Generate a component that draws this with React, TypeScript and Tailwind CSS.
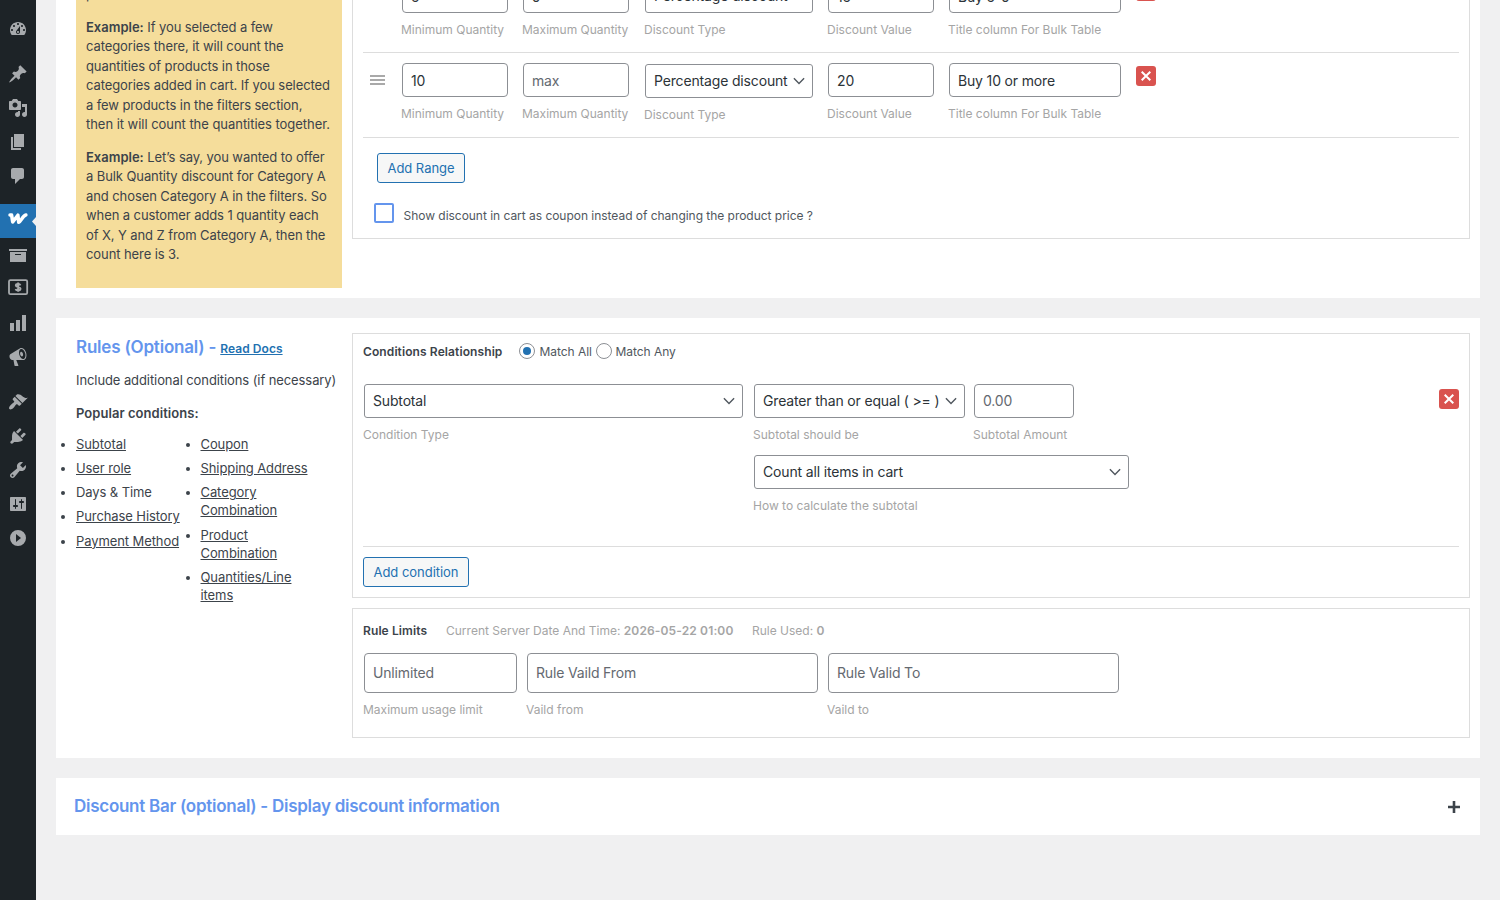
import React from 'react';

const MENU_GROUPS: { id: string; path: string }[][] = [
  [
    {
      id: 'dashboard',
      path: 'M3.76 16h12.48c1.1-1.37 1.76-3.11 1.76-5 0-4.42-3.58-8-8-8s-8 3.58-8 8c0 1.89.66 3.63 1.76 5zM10 4c.55 0 1 .45 1 1s-.45 1-1 1-1-.45-1-1 .45-1 1-1zM6 6c.55 0 1 .45 1 1s-.45 1-1 1-1-.45-1-1 .45-1 1-1zm8 0c.55 0 1 .45 1 1s-.45 1-1 1-1-.45-1-1 .45-1 1-1zm-5.37 5.55L12 7v6c0 1.1-.9 2-2 2s-2-.9-2-2c0-.57.24-1.08.63-1.45zM4 10c.55 0 1 .45 1 1s-.45 1-1 1-1-.45-1-1 .45-1 1-1zm12 0c.55 0 1 .45 1 1s-.45 1-1 1-1-.45-1-1 .45-1 1-1zm-5 3c0-.55-.45-1-1-1s-1 .45-1 1 .45 1 1 1 1-.45 1-1z',
    },
  ],
  [
    {
      id: 'posts',
      path: 'M10.44 3.02l1.82-1.82 6.36 6.35-1.83 1.82c-1.05-.68-2.48-.57-3.41.36l-.75.75c-.92.93-1.04 2.35-.35 3.41l-1.83 1.82-2.41-2.41-2.8 2.79c-.42.42-3.38 2.71-3.8 2.29s1.86-3.39 2.28-3.81l2.79-2.79L4.1 9.36l1.83-1.82c1.05.69 2.48.57 3.4-.36l.75-.75c.93-.92 1.05-2.35.36-3.41z',
    },
    {
      id: 'media',
      path: 'M13 11V4c0-.55-.45-1-1-1h-1.67L9 1H5L3.67 3H2c-.55 0-1 .45-1 1v7c0 .55.45 1 1 1h10c.55 0 1-.45 1-1zM7 4.5c1.38 0 2.5 1.12 2.5 2.5S8.38 9.5 7 9.5 4.5 8.38 4.5 7 5.62 4.5 7 4.5zM14 6h5v10.5c0 1.38-1.12 2.5-2.5 2.5S14 17.88 14 16.5s1.12-2.5 2.5-2.5c.17 0 .34.02.5.05V9h-3V6zm-4 8.05V13h2v3.5c0 1.38-1.12 2.5-2.5 2.5S7 17.88 7 16.5 8.12 14 9.5 14c.17 0 .34.02.5.05z',
    },
    { id: 'pages', path: 'M6 15V2h10v13H6zm-1 1h8v2H3V5h2v11z' },
    {
      id: 'comments',
      path: 'M5 2h9c1.1 0 2 .9 2 2v7c0 1.1-.9 2-2 2h-2l-5 5v-5H5c-1.1 0-2-.9-2-2V4c0-1.1.9-2 2-2z',
    },
  ],
  [
    { id: 'woo', path: '' },
    { id: 'products', path: 'M19 4v2H1V4h18zM2 7h16v10H2V7zm11 3V9H7v1h6z' },
    { id: 'payments', path: '' },
    { id: 'analytics', path: 'M18 18V2h-4v16h4zm-6 0V7H8v11h4zm-6 0v-8H2v8h4z' },
    {
      id: 'marketing',
      path: 'M18.15 5.94c.46 1.62.38 3.22-.02 4.48-.42 1.28-1.26 2.18-2.3 2.48-.16.06-.26.06-.4.06-.06.02-.12.02-.18.02-.06.02-.14.02-.22.02h-6.8l2.22 5.5c.02.14-.06.26-.14.34-.08.1-.24.16-.34.16H6.95c-.1 0-.26-.06-.34-.16-.08-.08-.16-.2-.14-.34l-1-5.5H4.25l-.02-.02c-.5.06-1.08-.18-1.54-.62s-.88-1.08-1.06-1.88c-.24-.8-.2-1.56-.02-2.2.18-.62.58-1.08 1.06-1.3l.02-.02 9-5.4c.1-.06.18-.1.24-.16.06-.04.14-.08.24-.12.16-.08.28-.12.5-.18 1.04-.3 2.24.1 3.22.98s1.84 2.24 2.26 3.86zm-2.58 5.98h-.02c.4-.1.74-.34 1.04-.7.58-.7.86-1.76.86-3.04 0-.64-.1-1.3-.28-1.98-.34-1.36-1.02-2.5-1.78-3.24s-1.68-1.1-2.46-.88c-.82.22-1.4.96-1.7 2-.32 1.04-.28 2.36.06 3.72.38 1.36 1 2.5 1.8 3.24.78.74 1.62 1.1 2.48.88zm-2.54-7.08c.22-.04.42-.02.62.04.38.16.76.48 1.02 1s.42 1.2.42 1.78c0 .3-.04.56-.12.8-.18.48-.44.84-.86.94-.34.1-.8-.06-1.14-.4s-.64-.86-.78-1.5c-.18-.62-.12-1.24.02-1.72s.48-.84.82-.94z',
    },
  ],
  [
    {
      id: 'appearance',
      path: 'M14.48 11.06L7.41 3.99l1.5-1.5c.5-.56 2.3-.47 3.51.32 1.21.8 1.43 1.28 2.91 2.1 1.18.64 2.45 1.26 4.45.85zm-.71.71L6.7 4.7 4.93 6.47c-.39.39-.39 1.02 0 1.41l1.06 1.06c.39.39.39 1.03 0 1.42-.6.6-1.43 1.11-2.21 1.69-.35.26-.7.53-1.01.84C1.43 14.23.4 16.08 1.4 17.07c.99 1 2.84-.03 4.18-1.36.31-.31.58-.66.85-1.02.57-.78 1.08-1.61 1.69-2.21.39-.39 1.02-.39 1.41 0l1.06 1.06c.39.39 1.02.39 1.41 0z',
    },
    {
      id: 'plugins',
      path: 'M13.11 4.36L9.87 7.6 8 5.73l3.24-3.24c.35-.34 1.05-.2 1.56.32.52.51.66 1.21.31 1.55zm-8 1.77l.91-1.12 9.01 9.01-1.19.84c-.71.71-2.63 1.16-3.82 1.16H6.14L4.9 17.26c-.59.59-1.54.59-2.12 0-.59-.58-.59-1.53 0-2.12l1.24-1.24v-3.88c0-1.13.4-3.19 1.09-3.89zm7.26 3.97l3.24-3.24c.34-.35 1.04-.21 1.55.31.52.51.66 1.21.31 1.55l-3.24 3.25z',
    },
    {
      id: 'tools',
      path: 'M16.68 9.77c-1.34 1.34-3.3 1.67-4.95.99l-5.41 6.52c-.99.99-2.59.99-3.58 0s-.99-2.59 0-3.57l6.52-5.42c-.68-1.65-.35-3.61.99-4.95 1.28-1.28 3.12-1.62 4.72-1.06l-2.89 2.89 2.82 2.82 2.86-2.87c.53 1.58.18 3.39-1.08 4.65zM3.81 16.21c.4.39 1.04.39 1.43 0 .4-.4.4-1.04 0-1.43-.39-.4-1.03-.4-1.43 0-.39.39-.39 1.03 0 1.43z',
    },
    {
      id: 'settings',
      path: 'M18 16V4c0-.55-.45-1-1-1H3c-.55 0-1 .45-1 1v12c0 .55.45 1 1 1h14c.55 0 1-.45 1-1zM8 11h1c.55 0 1 .45 1 1s-.45 1-1 1H8v1.5c0 .28-.22.5-.5.5s-.5-.22-.5-.5V13H6c-.55 0-1-.45-1-1s.45-1 1-1h1V5.5c0-.28.22-.5.5-.5s.5.22.5.5V11zm5-2h-1c-.55 0-1-.45-1-1s.45-1 1-1h1V5.5c0-.28.22-.5.5-.5s.5.22.5.5V7h1c.55 0 1 .45 1 1s-.45 1-1 1h-1v5.5c0 .28-.22.5-.5.5s-.5-.22-.5-.5V9z',
    },
    { id: 'collapse', path: 'M10 2a8 8 0 1 0 0 16 8 8 0 0 0 0-16zM8 14V6l5 4z' },
  ],
];

const MenuIcon: React.FC<{ id: string; path: string }> = ({ id, path }) => {
  if (id === 'woo') {
    return (
      <svg viewBox="0 0 20 20" className="w-5 h-5 overflow-visible" fill="none" stroke="#fff" strokeLinejoin="round" strokeLinecap="round">
        <path d="M2 3.9H3.600L4.700 11L9.900 4.200L10.700 11.200C13.200 10.600 14.400 4.600 17.900 4" strokeWidth="3.5" />
      </svg>
    );
  }
  if (id === 'payments') {
    return (
      <svg viewBox="0 0 20 20" className="w-5 h-5 overflow-visible" fill="none" stroke="#a7aaad">
        <rect x="1" y="1.2" width="18.2" height="14" rx="1.4" strokeWidth="1.8" />
        <path d="M12.500 6.300c-.4-.9-1.300-1.300-2.400-1.300-1.300 0-2.300.5-2.300 1.500 0 2.300 4.700.9 4.700 3.300 0 1-1 1.600-2.400 1.600-1.200 0-2.200-.5-2.500-1.500M10.100 3.600v9.200" strokeWidth="1.9" />
      </svg>
    );
  }
  return (
    <svg viewBox="0 0 20 20" className="w-5 h-5" fill="#a7aaad" fillRule="evenodd">
      <path d={path} />
    </svg>
  );
};

const Sidebar: React.FC = () => (
  <nav className="w-9 h-full shrink-0 bg-[#1d2327] pt-3 flex flex-col gap-[11px]">
    {MENU_GROUPS.map((group, i) => (
      <ul key={i}>
        {group.map(item => (
          <li
            key={item.id}
            className={
              item.id === 'woo'
                ? 'relative h-[34px] pl-2 flex items-center bg-[#2271b1]'
                : 'h-[34px] pl-[7.5px] flex items-center'
            }
          >
            <MenuIcon id={item.id} path={item.path} />
            {item.id === 'woo' && (
              <svg viewBox="0 0 4 9" className="absolute right-0 top-[12.5px] w-1 h-[9px]" fill="#f0f0f1">
                <path d="M4 0v9L0 4.5z" />
              </svg>
            )}
          </li>
        ))}
      </ul>
    ))}
  </nav>
);

const Chevron: React.FC = () => (
  <svg viewBox="0 0 16 16" className="w-4 h-4 shrink-0" fill="none" stroke="#50575e" strokeWidth="1.4">
    <path d="M2.9 5.3L8 10.4l5.1-5.1" />
  </svg>
);

interface FieldProps {
  label: string;
  width: string;
  value?: string;
  placeholder?: string;
  select?: boolean;
  tall?: boolean;
  // nudges the text down inside the box
  low?: boolean;
  className?: string;
}

const Field: React.FC<FieldProps> = ({ label, width, value, placeholder, select, tall, low, className = '' }) => (
  <div className={`shrink-0 ${width} ${className}`}>
    <div
      className={`w-full ${tall ? 'h-10' : 'h-[34px]'} ${low ? 'pt-[2px]' : ''} flex items-center justify-between border border-[#8c8f94] bg-white pl-2 pr-[5px] text-sm tracking-[-0.16px] whitespace-nowrap ${
        select ? 'rounded-[3px]' : 'rounded'
      } ${value ? 'text-[#2c3338]' : 'text-[#646970]'}`}
    >
      <span>{value ?? placeholder}</span>
      {select && <Chevron />}
    </div>
    <div className="mt-2 -ml-px h-[18px] text-xs leading-[18px] text-[#a5a5a5] whitespace-nowrap">{label}</div>
  </div>
);

const RemoveButton: React.FC = () => (
  <button className="w-5 h-5 shrink-0 rounded-[3px] bg-[#d9534f] flex items-center justify-center">
    <svg viewBox="0 0 10 10" className="w-[10px] h-[10px]" stroke="#fff" strokeWidth="2" fill="none">
      <path d="M.7.7l8.600 8.600M9.300.7L.7 9.300" />
    </svg>
  </button>
);

const OutlineButton: React.FC<{ children: React.ReactNode; width: string }> = ({ children, width }) => (
  <button
    className={`${width} h-[30px] pt-[2px] border border-[#2271b1] rounded-[3px] bg-[#f6f7f7] text-[13px] tracking-[-0.03px] text-[#2271b1] whitespace-nowrap`}
  >
    {children}
  </button>
);

interface RangeRowProps {
  min: string;
  max?: string;
  discount: string;
  title: string;
  fieldClass?: string;
}

const RangeRow: React.FC<RangeRowProps> = ({ min, max, discount, title, fieldClass = '' }) => (
  <div className="h-[85px] pt-[10px] pl-[7px] flex items-start border-b border-[#ddd]">
    <div className="mt-[12px] mr-[17px] w-[15px] shrink-0 flex flex-col gap-[2px]">
      <span className="h-[2px] bg-[#a9a9a9]" />
      <span className="h-[2px] bg-[#a9a9a9]" />
      <span className="h-[2px] bg-[#a9a9a9]" />
    </div>
    <Field label="Minimum Quantity" width="w-[106px]" className={fieldClass} value={min} low />
    <Field label="Maximum Quantity" width="w-[106px]" className={`ml-[15px] ${fieldClass}`} value={max} placeholder="max" low />
    <Field label="Discount Type" width="w-[168px]" className="ml-4 mt-px" value="Percentage discount" select />
    <Field label="Discount Value" width="w-[106px]" className={`ml-[15px] ${fieldClass}`} value={discount} low />
    <Field label="Title column For Bulk Table" width="w-[172px]" className={`ml-[15px] ${fieldClass}`} value={title} low />
    <div className="ml-[15px] mt-[3px]">
      <RemoveButton />
    </div>
  </div>
);

const DiscountSection: React.FC = () => (
  <section className="h-[298px] shrink-0 bg-white overflow-hidden flex items-end pl-5 pr-[10px]">
    <div className="w-[266px] h-[298px] mb-[10px] shrink-0 bg-[#f5dd9b] px-[10px] pb-[23.5px] flex flex-col justify-end gap-[13px] text-[13px] leading-[19.5px] tracking-[-0.09px] text-[#3c434a]">
      <p>products.</p>
      <p className="whitespace-nowrap">
        <b className="font-semibold tracking-normal">Example:</b> If you selected a few
        <br />
        categories there, it will count the
        <br />
        quantities of products in those
        <br />
        categories added in cart. If you selected
        <br />
        a few products in the filters section,
        <br />
        <span className="tracking-[-0.04px]">then it will count the quantities together.</span>
      </p>
      <p className="whitespace-nowrap">
        <b className="font-semibold tracking-normal">Example:</b> Let’s say, you wanted to offer
        <br />
        a Bulk Quantity discount for Category A
        <br />
        and chosen Category A in the filters. So
        <br />
        when a customer adds 1 quantity each
        <br />
        of X, Y and Z from Category A, then the
        <br />
        count here is 3.
      </p>
    </div>
    <div className="ml-[10px] mb-[59px] flex-1 border border-[#ddd] px-[10px] pb-[15px]">
      <RangeRow min="5" max="9" discount="15" title="Buy 5-9" fieldClass="mt-px" />
      <RangeRow min="10" discount="20" title="Buy 10 or more" />
      <div className="mt-[15px] ml-[14px]">
        <OutlineButton width="w-[88px]">Add Range</OutlineButton>
      </div>
      <label className="h-5 mt-5 ml-[11px] flex items-center text-xs tracking-[-0.03px] text-[#50575e]">
        <span className="w-5 h-5 border-2 border-[#6495ed] rounded-[2px] bg-white" />
        <span className="ml-[9.5px] mt-[6px]">Show discount in cart as coupon instead of changing the product price ?</span>
      </label>
    </div>
  </section>
);

const Bulleted: React.FC<{ items: string[]; width: string }> = ({ items, width }) => (
  <ul className={`${width} list-disc text-[13px] leading-[18.2px]`}>
    {items.map(item => (
      <li key={item} className="mb-[6px]">
        <span className={item === 'Days & Time' ? '' : 'underline'}>{item}</span>
      </li>
    ))}
  </ul>
);

const Radio: React.FC<{ checked?: boolean }> = ({ checked }) => (
  <span className="w-4 h-4 rounded-full border border-[#8c8f94] bg-white flex items-center justify-center">
    {checked && <span className="w-2 h-2 rounded-full bg-[#2271b1]" />}
  </span>
);

const RulesSection: React.FC = () => (
  <section className="h-[440px] shrink-0 bg-white flex pl-5 pr-[10px] pt-[15px]">
    <div className="w-[266px] shrink-0 text-[13px] tracking-[-0.09px] text-[#3c434a]">
      <h2 className="h-7 leading-7 text-[17px] font-semibold tracking-[-0.2px] text-[#6495ed] whitespace-nowrap">
        Rules (Optional) - <a className="text-xs tracking-[0.05px] underline text-[#2271b1]">Read Docs</a>
      </h2>
      <p className="mt-[9px] leading-5 whitespace-nowrap">Include additional conditions (if necessary)</p>
      <p className="mt-[13px] leading-5 font-semibold tracking-[0.05px]">Popular conditions:</p>
      <div className="mt-[11.8px] flex">
        <Bulleted width="w-[124.5px]" items={['Subtotal', 'User role', 'Days & Time', 'Purchase History', 'Payment Method']} />
        <Bulleted
          width="w-[110px]"
          items={['Coupon', 'Shipping Address', 'Category Combination', 'Product Combination', 'Quantities/Line items']}
        />
      </div>
    </div>

    <div className="ml-[10px] flex-1 flex flex-col gap-[10px]">
      <div className="h-[265px] border border-[#ddd] px-[10px]">
        <div className="mt-[9px] h-4 flex items-center text-xs tracking-[-0.04px] text-[#50575e]">
          <b className="w-[156px] mt-[2px] font-semibold tracking-[0.1px] text-[#3c434a]">Conditions Relationship</b>
          <Radio checked />
          <span className="ml-[4.5px] mr-1 mt-[2px]">Match All</span>
          <Radio />
          <span className="ml-[3.5px] mt-[2px]">Match Any</span>
        </div>
        <div className="mt-[25px] h-[163px] flex items-start border-b border-[#ddd]">
          <Field label="Condition Type" width="w-[379px]" className="ml-px" value="Subtotal" select />
          <div className="ml-[11px] flex flex-col gap-[11px]">
            <div className="flex">
              <Field label="Subtotal should be" width="w-[211px]" value="Greater than or equal ( >= )" select />
              <Field label="Subtotal Amount" width="w-[100px]" className="ml-[9px]" placeholder="0.00" />
            </div>
            <Field label="How to calculate the subtotal" width="w-[375px]" value="Count all items in cart" select />
          </div>
          <div className="ml-auto mt-[5px]">
            <RemoveButton />
          </div>
        </div>
        <div className="mt-[10px]">
          <OutlineButton width="w-[106px]">Add condition</OutlineButton>
        </div>
      </div>

      <div className="h-[130px] border border-[#ddd] px-[10px] pt-[13px]">
        <div className="h-[18px] flex items-center text-xs text-[#a5a5a5] whitespace-nowrap">
          <b className="w-[83px] font-semibold tracking-[0.1px] text-[#3c434a]">Rule Limits</b>
          <span className="w-[306px]">
            Current Server Date And Time: <b className="font-semibold tracking-[0.14px]">2026-05-22 01:00</b>
          </span>
          <span>
            Rule Used: <b className="font-semibold">0</b>
          </span>
        </div>
        <div className="mt-[13px] ml-px flex gap-[10px]">
          <Field label="Maximum usage limit" width="w-[153px]" placeholder="Unlimited" tall />
          <Field label="Vaild from" width="w-[291px]" placeholder="Rule Vaild From" tall />
          <Field label="Vaild to" width="w-[291px]" placeholder="Rule Valid To" tall />
        </div>
      </div>
    </div>
  </section>
);

const DiscountBarSection: React.FC = () => (
  <section className="h-[57px] shrink-0 bg-white flex items-center justify-between pl-[18px] pr-5">
    <h2 className="text-[17px] font-semibold tracking-[-0.27px] text-[#6495ed]">Discount Bar (optional) - Display discount information</h2>
    <svg viewBox="0 0 12 12" className="w-3 h-3 mt-px" stroke="#3c434a" strokeWidth="2.6">
      <path d="M6 0v12M0 6h12" />
    </svg>
  </section>
);

export default function App() {
  return (
    <div className="w-[1500px] h-[900px] overflow-hidden flex bg-[#f0f0f1] font-['Inter',sans-serif]">
      <Sidebar />
      <main className="flex-1 pl-5 pr-5 flex flex-col gap-5">
        <DiscountSection />
        <RulesSection />
        <DiscountBarSection />
      </main>
    </div>
  );
}
